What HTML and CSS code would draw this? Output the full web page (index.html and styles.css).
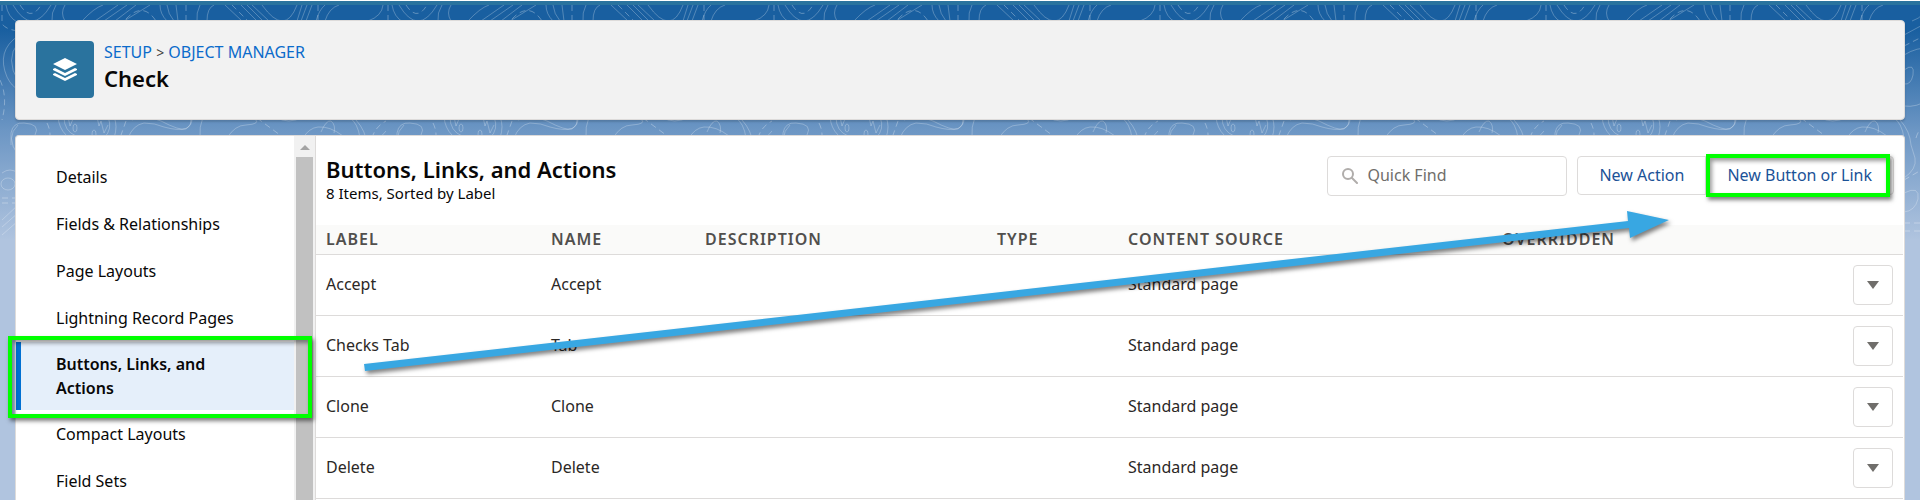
FILE: index.html
```
<!DOCTYPE html>
<html lang="en">
<head>
  <meta charset="UTF-8" />
  <meta name="viewport" content="width=device-width, initial-scale=1.0" />
  <title>Check | Object Manager</title>
  <link rel="stylesheet" href="styles.css">
</head>
<body>
  <div class="top-tabs"></div>
  <svg class="pattern" aria-hidden="true">
    <defs>
      <pattern id="topo" width="386" height="260" patternUnits="userSpaceOnUse">
        <g fill="none" stroke="#fff" stroke-opacity="0.25" stroke-width="1">
          <!-- top band -->
          <path d="M6 0Q8 12 17 17M13 0Q32 32 51 0M56 0Q51 8 52 16M65 0Q60 8 65 16" />
          <path d="M103 0Q94 3 82 16M118 0L95 16M127 0L104 16M136 0L115 16M150 0L124 16" />
          <path d="M160 0Q160 9 167 16M167 0Q168 9 174 16M176 0L178 16M200 0Q196 8 197 16M214 0Q207 3 207 16" />
          <path d="M225 0L242 16M241 0L257 16M247 0L263 16M252 0L269 16M262 0Q285 32 297 0M302 0L297 16M307 0L301 16M312 0L306 16M325 0Q319 5 316 16M339 0Q329 3 325 16M383 0Q382 11 368 16" />
          <!-- middle band -->
          <path d="M11 140V128Q13 117 24 118Q41 119 35 130M58 112Q59 123 66 130M64 112Q64 126 76 131M108 112Q113 124 104 133M114 112Q118 121 114 133" />
          <path d="M128 133Q133 120 144 118Q155 118 164 122Q193 130 192 112M132 115Q145 109 161 116Q180 126 186 124Q193 119 190 112M203 112Q199 122 200 133M227 133Q235 120 246 120Q261 119 255 114M303 133Q309 123 318 122Q330 121 343 131M321 127Q326 115 331 116Q336 120 334 128M349 112Q358 118 360 133M276 112Q288 120 303 112" />
          <ellipse cx="75" cy="123" rx="2" ry="4" /><ellipse cx="94" cy="129" rx="2" ry="4" />
          <path d="M68 112L70 121L73 114M97 112L99 121L101 116L104 128L108 120" />
          <!-- page edges -->
          <path d="M18 31Q-4 46 7 72Q12 82 18 84M18 38Q5 54 18 76M18 120Q5 132 18 150" />
          <ellipse cx="8" cy="179" rx="7" ry="6" />
          <path d="M2 168Q10 162 18 168M2 215L18 200M2 222L18 208M2 230L18 216" />
          <path d="M360 30Q371 24 386 16M360 50Q373 42 386 43M360 65Q371 57 369 70Q367 80 360 79M360 101Q372 103 386 94M356 115Q366 126 367 140L371 153Q373 164 360 173M386 126Q370 142 386 151M360 188Q376 180 374 194Q371 206 360 207" />
        </g>
        <g fill="none" stroke="#fff" stroke-opacity="0.3" stroke-dasharray="6 4">
          <path d="M2 0V18Q4 24 18 26M20 0Q31 17 41 0M126 14Q143-4 156 16M186 0V16M232 0L248 16M318 0V16M0 75Q8 92 2 115M47 118Q50 124 50 130M126 116L120 133M257 113L280 130M372 133Q375 122 386 116" />
          <path d="M360 41L386 28M360 175L386 160M360 218H386M360 226H386M2 193H18M2 198H18" />
        </g>
      </pattern>
    </defs>
    <rect width="100%" height="100%" fill="url(#topo)" />
  </svg>

  <header class="page-header">
    <div class="page-icon">
      <svg viewBox="0 0 26 26" width="26" height="26" aria-hidden="true">
        <path fill="#fff" d="M13 1L1 7l12 6 12-6zM1 12l2-1 10 5 10-5 2 1v1l-12 6-12-6zM1 17l2-1 10 5 10-5 2 1v1l-12 6-12-6z" />
      </svg>
    </div>
    <div class="page-title">
      <nav class="crumbs"><a href="#">SETUP</a> <span>&gt;</span> <a href="#">OBJECT MANAGER</a></nav>
      <h1>Check</h1>
    </div>
  </header>

  <div class="panel">
    <aside class="sidebar">
      <ul class="menu">
        <li><a href="#">Details</a></li>
        <li><a href="#">Fields &amp; Relationships</a></li>
        <li><a href="#">Page Layouts</a></li>
        <li><a href="#">Lightning Record Pages</a></li>
        <li class="active"><a href="#">Buttons, Links, and Actions</a></li>
        <li><a href="#">Compact Layouts</a></li>
        <li><a href="#">Field Sets</a></li>
      </ul>
      <div class="scrollbar">
        <span class="scroll-up"></span>
        <span class="scroll-thumb"></span>
      </div>
      <div class="highlight highlight-menu"></div>
    </aside>

    <main class="content">
      <div class="content-header">
        <div class="content-title">
          <h2>Buttons, Links, and Actions</h2>
          <p>8 Items, Sorted by Label</p>
        </div>
        <div class="search">
          <svg viewBox="0 0 16 16" width="16" height="16" aria-hidden="true">
            <circle cx="6" cy="6" r="5" fill="none" stroke="#b0adab" stroke-width="2" />
            <path d="M10 10l5 5" stroke="#b0adab" stroke-width="2" stroke-linecap="round" />
          </svg>
          <input type="search" placeholder="Quick Find" aria-label="Quick Find">
        </div>
        <div class="button-group">
          <button type="button">New Action</button>
          <button type="button">New Button or Link</button>
          <div class="highlight highlight-button"></div>
        </div>
      </div>

      <div class="table-wrap">
        <table class="actions-table">
          <colgroup>
            <col class="col-label"><col class="col-name"><col class="col-description"><col class="col-type"><col class="col-source"><col class="col-overridden"><col class="col-menu">
          </colgroup>
          <thead>
            <tr>
              <th>Label</th>
              <th>Name</th>
              <th>Description</th>
              <th>Type</th>
              <th>Content Source</th>
              <th>Overridden</th>
              <th></th>
            </tr>
          </thead>
          <tbody>
            <tr>
              <td>Accept</td><td>Accept</td><td></td><td></td><td>Standard page</td><td></td>
              <td><button type="button" class="row-menu" aria-label="Accept actions"></button></td>
            </tr>
            <tr>
              <td>Checks Tab</td><td>Tab</td><td></td><td></td><td>Standard page</td><td></td>
              <td><button type="button" class="row-menu" aria-label="Checks Tab actions"></button></td>
            </tr>
            <tr>
              <td>Clone</td><td>Clone</td><td></td><td></td><td>Standard page</td><td></td>
              <td><button type="button" class="row-menu" aria-label="Clone actions"></button></td>
            </tr>
            <tr>
              <td>Delete</td><td>Delete</td><td></td><td></td><td>Standard page</td><td></td>
              <td><button type="button" class="row-menu" aria-label="Delete actions"></button></td>
            </tr>
          </tbody>
        </table>
      </div>
    </main>
  </div>

  <svg class="arrow" viewBox="0 0 1920 500" aria-hidden="true">
    <path fill="#38a7e2" d="M364 364L1628 221L1627 211L1669 220L1630 238L1629 228L365 371z" />
  </svg>
</body>
</html>
```
FILE: styles.css
```
* {
  box-sizing: border-box;
}

body {
  margin: 0;
  height: 100vh;
  overflow: hidden;
  display: flex;
  flex-direction: column;
  position: relative;
  font-family: "Noto Sans", sans-serif;
  font-size: 16px;
  line-height: 24px;
  color: #080707;
  background: linear-gradient(to bottom, #195fa0 30px, #6c96c4 130px, #b0c4df 240px);
}

h1, h2, p, ul {
  margin: 0;
  padding: 0;
}

a {
  text-decoration: none;
}

.top-tabs {
  height: 5px;
  flex: none;
  border-top: 1px solid #fff;
  background: #2a739e;
  z-index: 1;
}

.pattern {
  position: absolute;
  top: 5px;
  left: 0;
  width: 100%;
  height: 245px;
}

.page-header {
  display: flex;
  align-items: flex-start;
  gap: 10px;
  flex: none;
  height: 100px;
  margin: 15px 15px 0;
  padding: 20px;
  border: 1px solid #dddbda;
  border-radius: 4px;
  background: #f2f2f2;
  box-shadow: 0 2px 2px rgba(0, 0, 0, 0.15);
  z-index: 1;
}

.page-icon {
  display: flex;
  align-items: center;
  justify-content: center;
  width: 58px;
  height: 57px;
  border-radius: 4px;
  background: #2a739e;
}

.crumbs {
  line-height: 22px;
  color: #3e3e3c;
}

.crumbs span {
  font-size: 14px;
}

.crumbs a {
  color: #0b6bcb;
}

h1, h2 {
  font-size: 22px;
  font-weight: 600;
  line-height: 28px;
}

.panel {
  display: flex;
  flex: 1;
  min-height: 0;
  margin: 15px 15px 0;
  border: 1px solid #dddbda;
  border-bottom: 0;
  border-radius: 4px 4px 0 0;
  background: #fff;
  z-index: 1;
}

.sidebar {
  display: flex;
  flex: none;
  width: 300px;
  position: relative;
  border-right: 1px solid #dddbda;
}

.menu {
  display: flex;
  flex-direction: column;
  gap: 1px;
  flex: 1;
  padding-top: 18px;
  overflow: hidden;
  list-style: none;
}

.menu a {
  display: block;
  padding: 11px 40px;
  color: #080707;
}

.menu .active {
  border-left: 5px solid #0070d2;
  background: #e5effa;
}

.menu .active a {
  padding: 10px 35px;
  font-weight: 600;
}

.scrollbar {
  display: flex;
  flex-direction: column;
  align-items: center;
  width: 21px;
  padding: 0 2px;
  background: #f1f1f1;
}

.scroll-up {
  margin: 9px 0 7px;
  border: 5px solid transparent;
  border-top: 0;
  border-bottom-color: #a3a3a3;
}

.scroll-thumb {
  flex: 1;
  width: 17px;
  background: #c1c1c1;
}

.content {
  flex: 1;
  min-width: 0;
  overflow: hidden;
}

.content-header {
  display: flex;
  align-items: flex-start;
  gap: 10px;
  height: 89px;
  padding: 20px 10px;
}

.content-title {
  flex: 1;
}

.content-title h2 {
  line-height: 26px;
}

.content-title p {
  font-size: 15px;
  line-height: 22px;
}

.search {
  display: flex;
  align-items: center;
  gap: 9px;
  width: 240px;
  height: 40px;
  padding: 0 14px;
  border: 1px solid #dddbda;
  border-radius: 4px;
}

.search input {
  flex: 1;
  min-width: 0;
  padding: 0 0 2px;
  border: 0;
  outline: 0;
  background: none;
  font: inherit;
}

.search input::placeholder {
  color: #706e6b;
}

.button-group {
  display: flex;
  position: relative;
}

.button-group button {
  height: 39px;
  padding: 0 21px 2px;
  border: 1px solid #dddbda;
  border-radius: 4px 0 0 4px;
  background: #fff;
  color: #1b5297;
  font: inherit;
}

.button-group button + button {
  margin-left: -1px;
  border-radius: 0 4px 4px 0;
}

.table-wrap {
  padding-right: 1px;
}

.actions-table {
  width: 100%;
  table-layout: fixed;
  border-collapse: separate;
  border-spacing: 0;
}

.col-label { width: 225px; }
.col-name { width: 154px; }
.col-description { width: 292px; }
.col-type { width: 131px; }
.col-source { width: 374px; }
.col-menu { width: 60px; }

.actions-table th,
.actions-table td {
  padding: 0 10px 2px;
  border-bottom: 1px solid #dddbda;
  text-align: left;
}

.actions-table th {
  height: 30px;
  background: #fafaf9;
  color: #514f4d;
  font-weight: 600;
  letter-spacing: 1px;
  text-transform: uppercase;
}

.actions-table td {
  height: 61px;
  color: #2b2826;
}

.actions-table td:last-child {
  padding-bottom: 0;
}

.row-menu {
  display: flex;
  align-items: center;
  justify-content: center;
  width: 40px;
  height: 40px;
  padding: 0;
  border: 1px solid #dddbda;
  border-radius: 4px;
  background: #fff;
}

.row-menu::before {
  content: "";
  border: 6px solid transparent;
  border-top: 8px solid #706e6b;
  border-bottom: 0;
}

/* callouts drawn over the page */
.highlight {
  position: absolute;
  border: 4px solid #0f0;
  box-shadow: 2px 3px 4px rgba(0, 0, 0, 0.5), inset 2px 3px 4px rgba(0, 0, 0, 0.4);
  pointer-events: none;
}

.highlight-menu {
  top: 200px;
  left: -8px;
  right: 3px;
  height: 82px;
}

.highlight-button {
  inset: -2px 4px -2px auto;
  width: 184px;
}

.arrow {
  position: absolute;
  top: 0;
  left: 0;
  width: 100%;
  z-index: 2;
  pointer-events: none;
  filter: drop-shadow(2px 3px 2px rgba(0, 0, 0, 0.5));
}
```
